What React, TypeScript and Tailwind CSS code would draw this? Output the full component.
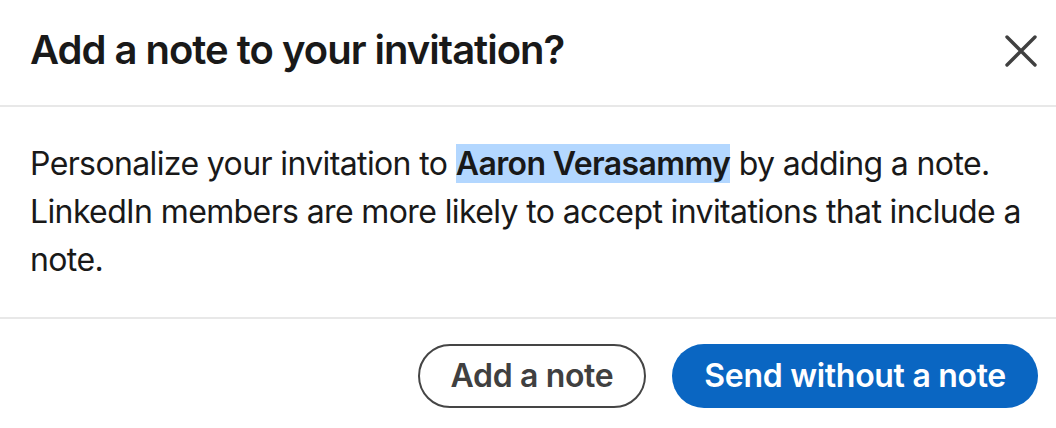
import React from "react";

export default function App() {
  return (
    <div
      className="w-[1056px] h-[428px] bg-white overflow-hidden flex flex-col text-[#191919]"
      style={{ fontFamily: "Inter, 'Noto Sans', Roboto, sans-serif" }}
    >
      <div className="h-[107px] shrink-0 flex items-center justify-between pl-[30px] pr-[11px] border-b-2 border-[#e8e8e8]">
        <h2 className="text-[40px] leading-[56px] font-semibold tracking-[-1px] pb-[6px]">
          Add a note to your invitation?
        </h2>
        <button className="w-[48px] h-[48px] mb-[4px] flex items-center justify-center" aria-label="Dismiss">
          <svg width="32" height="32" viewBox="0 0 32 32" fill="none">
            <path d="M2 2 L30 30 M30 2 L2 30" stroke="#404040" strokeWidth="3.4" strokeLinecap="round" />
          </svg>
        </button>
      </div>
      <div className="h-[212px] shrink-0 pl-[30px] pr-[24px] pt-[33px] border-b-2 border-[#e8e8e8]">
        <p className="text-[32px] leading-[48px] tracking-[-0.62px]">
          Personalize your invitation to{" "}
          <span className="font-semibold bg-[#b3d7ff]">Aaron Verasammy</span> by adding a note. LinkedIn members are
          more likely to accept invitations that include a note.
        </p>
      </div>
      <div className="flex justify-end items-start gap-[26px] pt-[25px] pr-[18px]">
        <button className="h-[64px] px-[31px] rounded-full border-2 border-[#454545] text-[#404040] text-[32px] font-semibold tracking-[-0.35px]">
          Add a note
        </button>
        <button className="h-[64px] px-[32px] rounded-full bg-[#0a66c2] text-white text-[32px] font-semibold tracking-[-0.3px]">
          Send without a note
        </button>
      </div>
    </div>
  );
}
